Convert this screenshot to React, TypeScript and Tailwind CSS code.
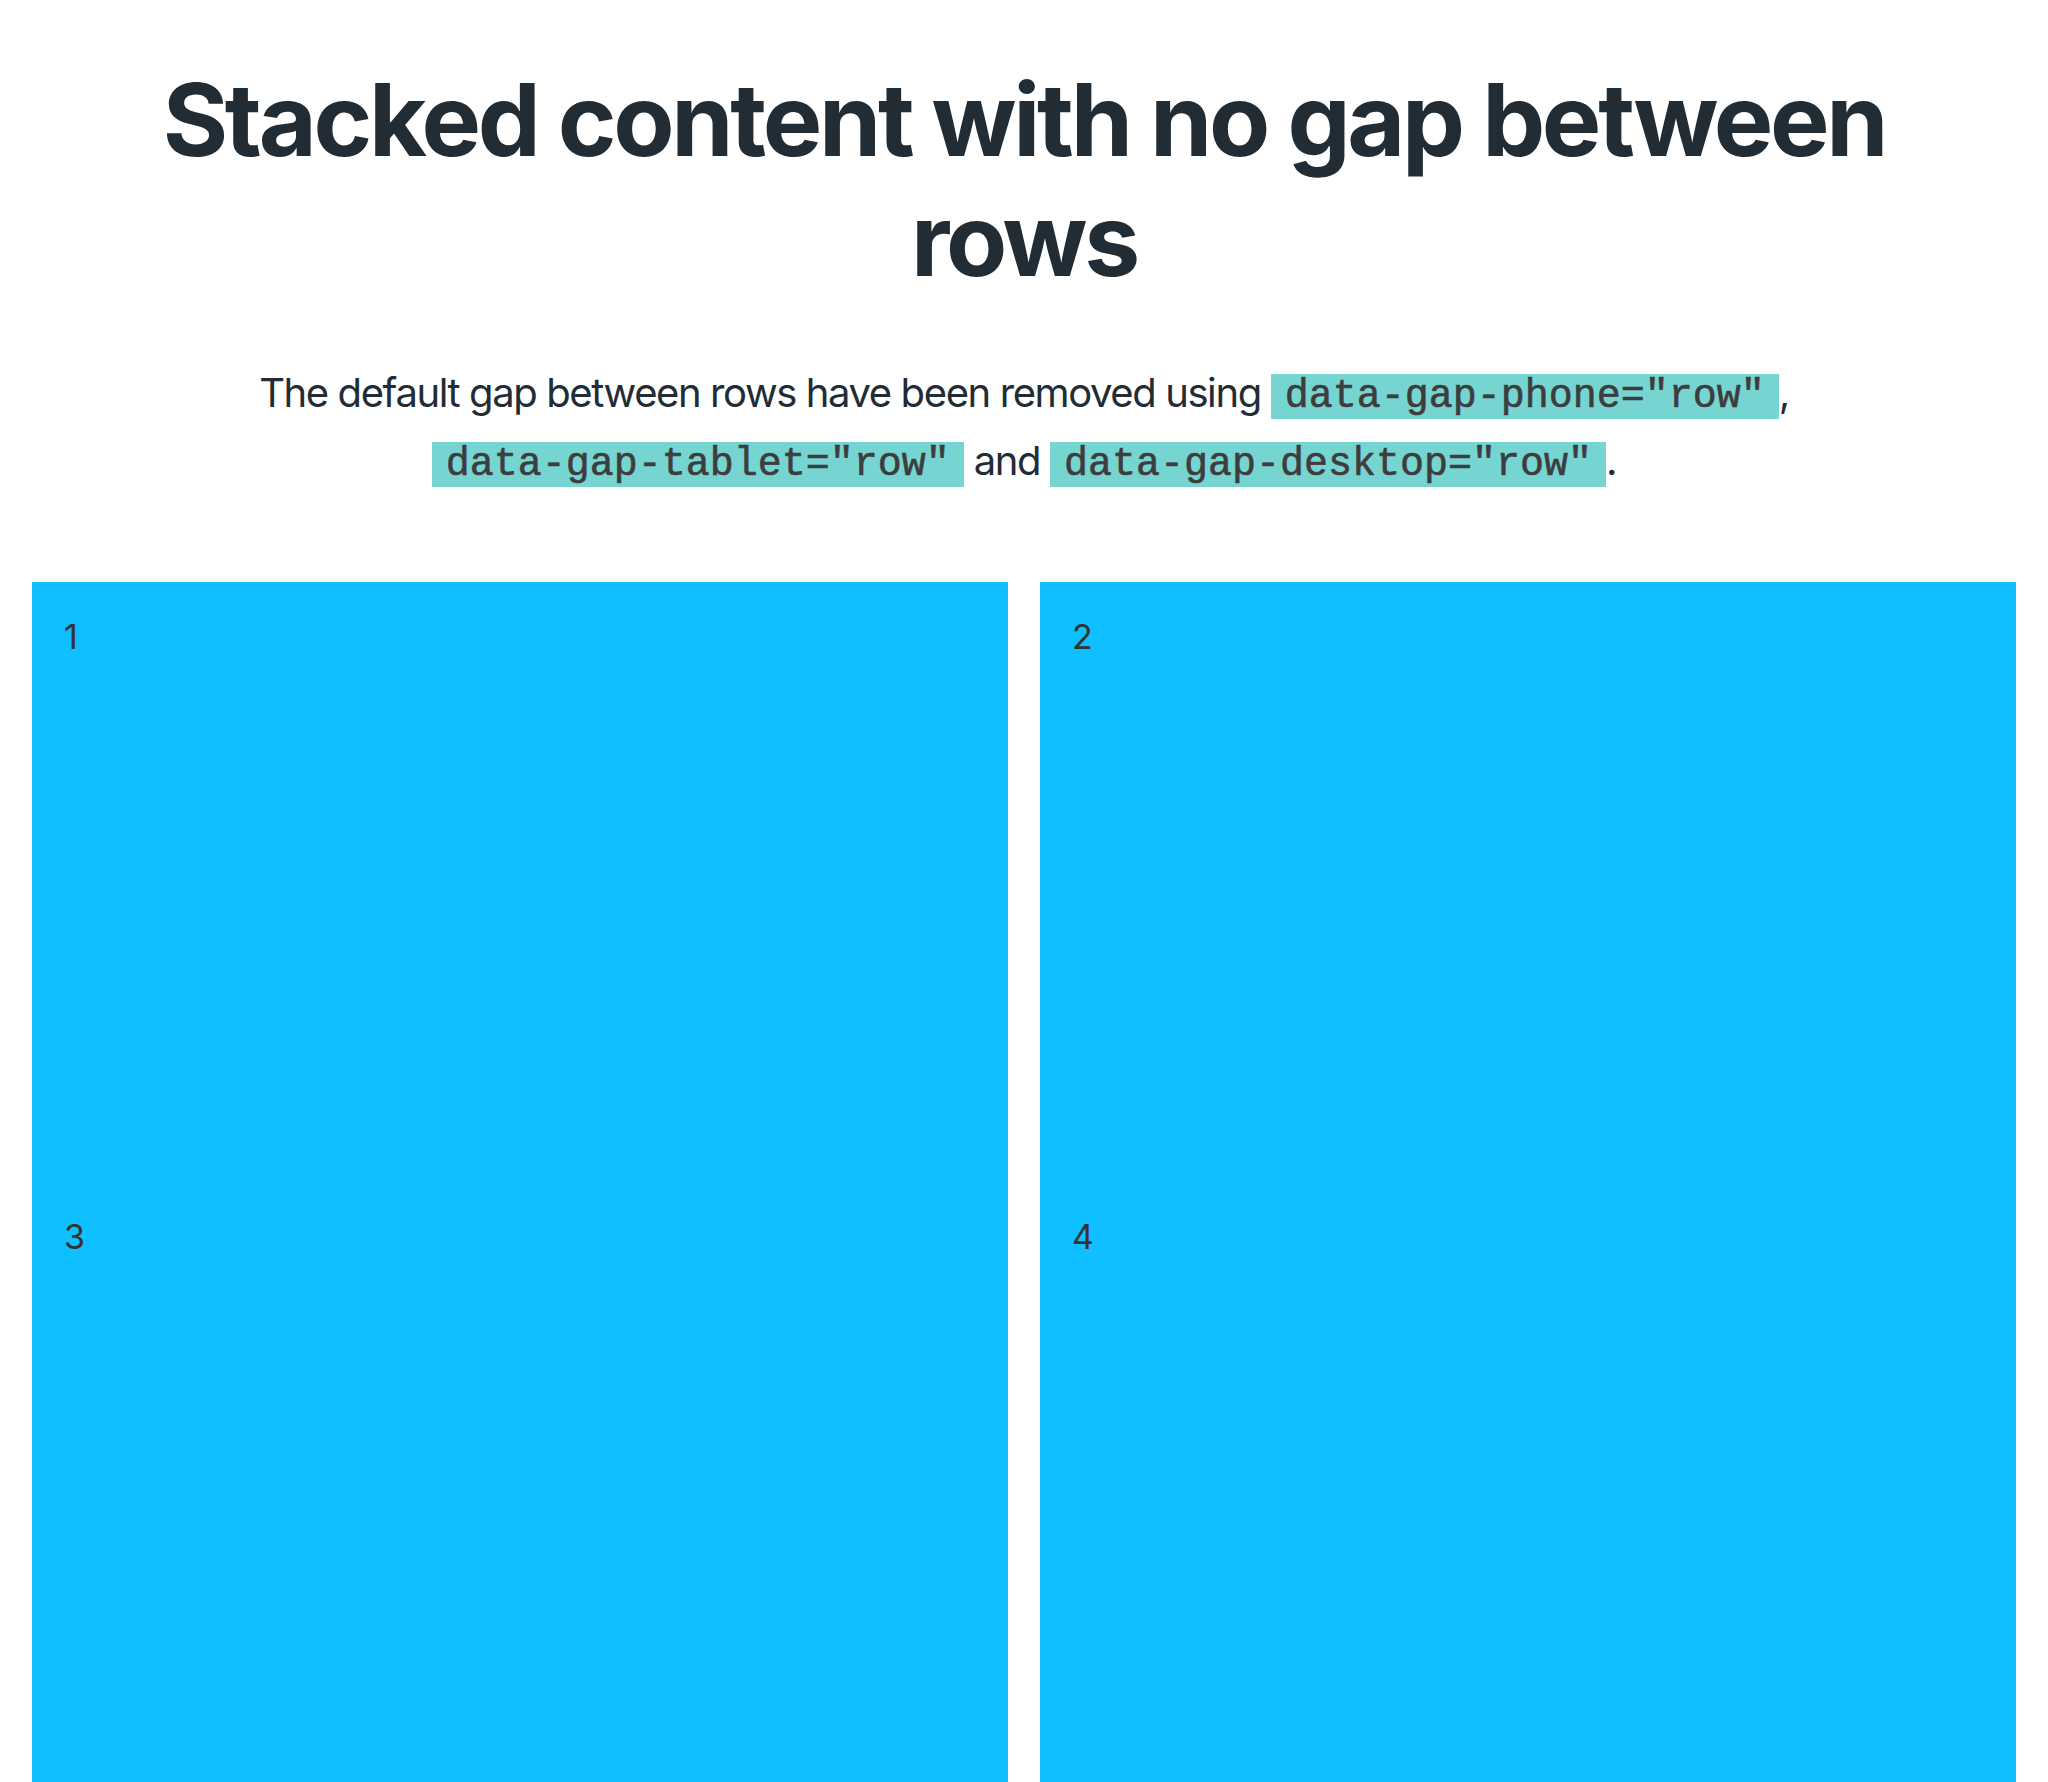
import React from "react";

const Code = ({ children }: { children: React.ReactNode }) => (
  <code className="bg-[#76d5d1] text-[#3d3d3d] px-[14px] font-normal tracking-normal whitespace-nowrap text-[40px] [font-family:'Liberation_Mono',monospace] [-webkit-text-stroke:0.6px_#3d3d3d]">
    {children}
  </code>
);

export default function App() {
  const boxes = ["1", "2", "3", "4"];
  return (
    <div className="bg-white min-h-[1782px] pt-[60px] px-[32px] overflow-hidden [font-family:Inter,'Noto_Sans',sans-serif]">
      <h1 className="text-center text-[100px] leading-[120px] font-bold tracking-[-3.3px] text-[#222c35] px-[100px]">
        Stacked content with no gap between rows
      </h1>
      <p className="mt-[61px] text-center text-[40px] leading-[64px] tracking-[-1.4px] text-[#222c35] px-[100px]">
        The default gap between rows have been removed using{" "}
        <Code>data-gap-phone="row"</Code>,{" "}
        <Code>data-gap-tablet="row"</Code> and{" "}
        <Code>data-gap-desktop="row"</Code>.
      </p>
      <div className="mt-[85px] grid grid-cols-2 gap-x-[32px] gap-y-0">
        {boxes.map((b) => (
          <div key={b} className="bg-[#0fbfff] h-[600px] px-[32px] pt-[34px]">
            <span className="text-[34px] leading-[41px] text-[#333333]">{b}</span>
          </div>
        ))}
      </div>
    </div>
  );
}
